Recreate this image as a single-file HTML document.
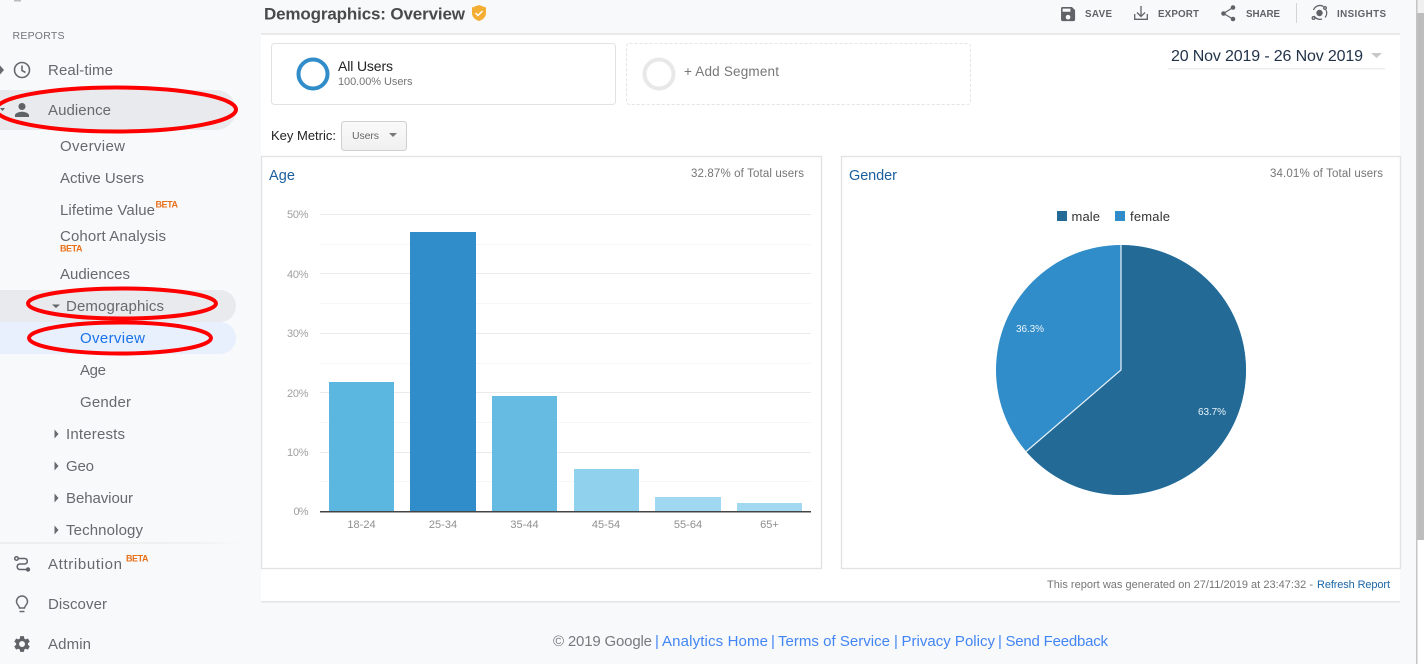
<!DOCTYPE html>
<html lang="en"><head><meta charset="utf-8"><title>Demographics: Overview</title>
<style>
html,body{margin:0;padding:0;width:1424px;height:664px;overflow:hidden;background:#f8f9fb}
svg{display:block}
text{font-family:"Liberation Sans",sans-serif}
.n{font-size:15px;fill:#66696d}
.b{font-size:9px;fill:#e8711a;font-weight:bold}
.a{font-size:9.800px;fill:#5f6368;font-weight:bold}
.y{font-size:11px;fill:#a0a0a0}
.x{font-size:11px;fill:#8f8f8f;text-anchor:middle}
.f{font-size:15px;fill:#4285f4}
</style></head><body>
<svg xmlns="http://www.w3.org/2000/svg" width="1424" height="664" viewBox="0 0 1424 664">
<defs><linearGradient id="btn" x1="0" y1="0" x2="0" y2="1"><stop offset="0" stop-color="#fafafa"/><stop offset="1" stop-color="#f0f0f0"/></linearGradient>
<linearGradient id="sep" x1="0" y1="0" x2="1" y2="0"><stop offset="0" stop-color="#eee"/><stop offset=".8" stop-color="#f1f1f1"/><stop offset="1" stop-color="#f8f9fb"/></linearGradient></defs>
<rect width="1424" height="664" fill="#f8f9fb"/>
<!-- scrollbar -->
<rect x="1417" y="0" width="7" height="664" fill="#fff"/>
<rect x="1417" y="0" width="7" height="13" fill="#f0f0f0"/>
<rect x="1417" y="13" width="7" height="527" fill="#bdbdbd"/>
<rect x="1416" y="0" width="1.500" height="664" fill="#c4c4c4"/>
<!-- sidebar highlights -->
<path d="M0 90H216a20 20 0 0 1 0 40H0Z" fill="#e8eaed"/>
<path d="M0 290H220a16 16 0 0 1 0 32H0Z" fill="#e8eaed"/>
<path d="M0 322H220a16 16 0 0 1 0 32H0Z" fill="#e8f0fe"/>
<rect x="0" y="542" width="242" height="2" fill="url(#sep)"/>
<rect x="14" y="0" width="7" height="1.500" fill="#bbb"/>
<!-- main panel -->
<rect x="261" y="34" width="1139" height="567" fill="#fff"/>
<rect x="261" y="33" width="1139" height="2" fill="#e9e9e9"/>
<rect x="261" y="601" width="1139" height="1.500" fill="#e4e4e4"/>
<!-- segments -->
<rect x="271.500" y="43.500" width="344" height="61" rx="3" fill="#fff" stroke="#e2e2e2"/>
<circle cx="313" cy="74" r="14.500" fill="none" stroke="#318dc9" stroke-width="4"/>
<rect x="626.500" y="43.500" width="344" height="61" rx="3" fill="#fff" stroke="#e4e4e4" stroke-dasharray="3 2"/>
<circle cx="659" cy="74" r="14.500" fill="none" stroke="#e8e8e8" stroke-width="4"/>
<!-- key metric button -->
<rect x="341.500" y="121.500" width="65" height="29" rx="3" fill="url(#btn)" stroke="#cfcfcf"/>
<path d="M389 133h8l-4 4z" fill="#777"/>
<!-- date -->
<rect x="1168" y="68" width="217" height="1.500" fill="#ececec"/>
<path d="M1371 53h11l-5.500 5z" fill="#c8c8c8"/>
<!-- chart panels -->
<rect x="261.500" y="156.500" width="560" height="412" fill="#fff" stroke="#e2e2e2" stroke-width="1.300"/>
<rect x="841.500" y="156.500" width="559" height="412" fill="#fff" stroke="#e2e2e2" stroke-width="1.300"/>
<!-- gridlines -->
<g fill="#ebebeb"><rect x="320" y="214" width="491" height="1"/><rect x="320" y="273" width="491" height="1"/><rect x="320" y="333" width="491" height="1"/><rect x="320" y="392" width="491" height="1"/><rect x="320" y="452" width="491" height="1"/></g>
<g fill="#f6f6f6"><rect x="320" y="244" width="491" height="1"/><rect x="320" y="303" width="491" height="1"/><rect x="320" y="363" width="491" height="1"/><rect x="320" y="422" width="491" height="1"/><rect x="320" y="481" width="491" height="1"/></g>
<!-- bars -->
<rect x="329" y="382" width="65" height="129" fill="#5bb7df"/>
<rect x="410" y="232" width="66" height="279" fill="#318dc9"/>
<rect x="492" y="396" width="65" height="115" fill="#65bbe2"/>
<rect x="574" y="469" width="65" height="42" fill="#90d1ee"/>
<rect x="655" y="497" width="66" height="14" fill="#a0d8f1"/>
<rect x="737" y="503" width="65" height="8" fill="#a2d9f1"/>
<rect x="320" y="511" width="491" height="1.500" fill="#444"/>
<!-- pie -->
<circle cx="1121" cy="370" r="125" fill="#318dc9"/>
<path d="M1121 370V245A125 125 0 1 1 1026.200 451.500Z" fill="#246a96"/>
<path d="M1121 245V370L1026.200 451.500" fill="none" stroke="#e8f2f8" stroke-width="1.200"/>
<rect x="1057" y="211" width="10" height="10" fill="#246a96"/>
<rect x="1115" y="211" width="10" height="10" fill="#318dc9"/>
<!-- ellipses -->
<g fill="none" stroke="#f00" stroke-width="4">
<ellipse cx="116" cy="109.500" rx="120" ry="22"/>
<ellipse cx="122" cy="303.500" rx="94" ry="15"/>
<ellipse cx="120" cy="338" rx="91" ry="15.500"/>
</g>
<!-- sidebar icons -->
<path d="M0 65.500l4 4.500-4 4.500z" fill="#66696d"/>
<g fill="none" stroke="#66696d" stroke-width="1.600"><circle cx="22" cy="70" r="7.500"/><path d="M22 65.500V70.500l3.500 2"/></g>
<path d="M0 108h5l-2.500 3z" fill="#5f6368"/>
<path transform="translate(11.500 99.500) scale(.875)" d="M12 12c2.210 0 4-1.790 4-4s-1.790-4-4-4-4 1.790-4 4 1.790 4 4 4zm0 2c-2.670 0-8 1.340-8 4v2h16v-2c0-2.660-5.330-4-8-4z" fill="#5f6368"/>
<path d="M52 304.500h8l-4 3.500z" fill="#5f6368"/>
<g fill="#66696d"><path d="M54.500 429.500l4 4.500-4 4.500z"/><path d="M54.500 461.500l4 4.500-4 4.500z"/><path d="M54.500 493.500l4 4.500-4 4.500z"/><path d="M54.500 525.500l4 4.500-4 4.500z"/></g>
<g fill="none" stroke="#5f6368" stroke-width="1.500"><circle cx="16.500" cy="558.500" r="1.800"/><path d="M18.500 558.500H25a2.800 2.800 0 0 1 0 5.500H19.500a2.800 2.800 0 0 0 0 5.500H26"/></g>
<circle cx="28" cy="569.500" r="2.200" fill="#5f6368"/>
<g fill="none" stroke="#66696d" stroke-width="1.500"><path d="M19.500 608c0-2-3-3.500-3-6.500a5.500 5.500 0 0 1 11 0c0 3-3 4.500-3 6.500z"/><path d="M19.500 611.500h5"/></g>
<path transform="translate(12.200 634.200) scale(.82)" fill="#5f6368" d="M19.140 12.940c.04-.3.06-.61.06-.94 0-.32-.02-.64-.07-.94l2.030-1.580c.18-.14.23-.41.12-.61l-1.920-3.320c-.12-.22-.37-.29-.59-.22l-2.390.96c-.5-.38-1.030-.7-1.620-.94l-.36-2.540c-.04-.24-.24-.41-.48-.41h-3.840c-.24 0-.43.17-.47.41l-.36 2.540c-.59.24-1.130.57-1.620.94l-2.390-.96c-.22-.08-.47 0-.59.22L2.740 8.870c-.12.21-.08.47.12.61l2.030 1.580c-.05.3-.09.63-.09.94s.02.64.07.94l-2.030 1.580c-.18.14-.23.41-.12.61l1.920 3.320c.12.22.37.29.59.22l2.390-.96c.5.38 1.030.7 1.620.94l.36 2.540c.05.24.24.41.48.41h3.840c.24 0 .44-.17.47-.41l.36-2.540c.59-.24 1.130-.56 1.620-.94l2.390.96c.22.08.47 0 .59-.22l1.920-3.320c.12-.22.07-.47-.12-.61l-2.010-1.580zM12 15.600c-1.980 0-3.600-1.620-3.600-3.600s1.620-3.600 3.600-3.600 3.600 1.620 3.600 3.600-1.620 3.600-3.600 3.600z"/>
<!-- shield -->
<path d="M479 5l7 2.500v5.500c0 4-3 6.800-7 8-4-1.200-7-4-7-8V7.500z" fill="#f4ae33"/>
<path d="M475.500 13l2.500 2.500 4.500-4.500" fill="none" stroke="#fff" stroke-width="1.500"/>
<!-- toolbar icons -->
<path transform="translate(1058.700 4.700) scale(.78)" fill="#5f6368" d="M17 3H5a2 2 0 0 0-2 2v14a2 2 0 0 0 2 2h14a2 2 0 0 0 2-2V7l-4-4zm-5 16a3 3 0 1 1 0-6 3 3 0 0 1 0 6zm3-10H5V5h10v4z"/>
<g fill="none" stroke="#5f6368" stroke-width="1.300"><path d="M1141 6v10M1137 12.500l4 4 4-4"/><path d="M1134.700 14v5.300h12.600V14"/></g>
<g fill="#5f6368"><circle cx="1233" cy="7.500" r="2.300"/><circle cx="1223.500" cy="13.500" r="2.300"/><circle cx="1233" cy="19" r="2.300"/></g>
<path d="M1233 7.500l-9.500 6 9.500 5.500" fill="none" stroke="#5f6368" stroke-width="1.200"/>
<rect x="1296" y="3" width="1" height="20" fill="#d5d5d5"/>
<g fill="none" stroke="#5f6368" stroke-width="1.300"><path d="M1313.500 10a6.800 6.800 0 0 1 10-3.500"/><path d="M1326 10a6.800 6.800 0 0 1-1 7.500"/><path d="M1322 19a6.800 6.800 0 0 1-8-3"/><circle cx="1325" cy="8" r="1.300"/><circle cx="1313.500" cy="18" r="1.300"/></g>
<circle cx="1319.500" cy="13" r="3.200" fill="#5f6368"/>
<!-- text: sidebar -->
<text x="12.500" y="39" font-size="10.500" fill="#70757a" textLength="52">REPORTS</text>
<text class="n" x="48" y="75" textLength="65">Real-time</text>
<text class="n" x="48" y="115" textLength="63">Audience</text>
<text class="n" x="60" y="151" textLength="65">Overview</text>
<text class="n" x="60" y="183" textLength="84">Active Users</text>
<text class="n" x="60" y="215" textLength="95">Lifetime Value</text>
<text class="b" x="155.500" y="207.500" textLength="22.500">BETA</text>
<text class="n" x="60" y="241" textLength="106">Cohort Analysis</text>
<text class="b" x="60" y="251.500" textLength="22.500">BETA</text>
<text class="n" x="60" y="279" textLength="70">Audiences</text>
<text class="n" x="66" y="311" textLength="98">Demographics</text>
<text class="n" x="80" y="343" textLength="65" style="fill:#1a73e8">Overview</text>
<text class="n" x="80" y="375" textLength="26">Age</text>
<text class="n" x="80" y="407" textLength="51">Gender</text>
<text class="n" x="66" y="439" textLength="59">Interests</text>
<text class="n" x="66" y="471" textLength="28">Geo</text>
<text class="n" x="66" y="503" textLength="67">Behaviour</text>
<text class="n" x="66" y="535" textLength="77">Technology</text>
<text class="n" x="48" y="569" textLength="74">Attribution</text>
<text class="b" x="126" y="561.500" textLength="22.500">BETA</text>
<text class="n" x="48" y="609" textLength="59">Discover</text>
<text class="n" x="48" y="649" textLength="43">Admin</text>
<!-- text: header -->
<text x="264" y="19.500" font-size="17" font-weight="bold" fill="#4a4a4a" textLength="201">Demographics: Overview</text>
<text class="a" x="1085" y="17" textLength="27">SAVE</text>
<text class="a" x="1158" y="17" textLength="41">EXPORT</text>
<text class="a" x="1246" y="17" textLength="34">SHARE</text>
<text class="a" x="1337" y="17" textLength="49">INSIGHTS</text>
<text x="338" y="71" font-size="14" fill="#222" textLength="55">All Users</text>
<text x="338" y="85" font-size="11" fill="#757575" textLength="74.500">100.00% Users</text>
<text x="684" y="76" font-size="13.500" fill="#777" textLength="95">+ Add Segment</text>
<text x="271" y="140" font-size="13" fill="#222" textLength="65">Key Metric:</text>
<text x="352" y="139" font-size="10.500" fill="#666" textLength="27">Users</text>
<text x="1171" y="61" font-size="16" fill="#22334a" textLength="192">20 Nov 2019 - 26 Nov 2019</text>
<!-- text: charts -->
<text x="269" y="180" font-size="14.500" fill="#1a5f9e" textLength="26">Age</text>
<text x="849" y="180" font-size="14.500" fill="#1a5f9e" textLength="48">Gender</text>
<text x="691" y="177" font-size="11.500" fill="#757575" textLength="113">32.87% of Total users</text>
<text x="1270" y="177" font-size="11.500" fill="#757575" textLength="113">34.01% of Total users</text>
<text class="y" x="287" y="218" textLength="21.500">50%</text>
<text class="y" x="287" y="278" textLength="21.500">40%</text>
<text class="y" x="287" y="337" textLength="21.500">30%</text>
<text class="y" x="287" y="397" textLength="21.500">20%</text>
<text class="y" x="287" y="456" textLength="21.500">10%</text>
<text class="y" x="293.500" y="515" textLength="15">0%</text>
<text class="x" x="361.500" y="528">18-24</text>
<text class="x" x="443" y="528">25-34</text>
<text class="x" x="524.500" y="528">35-44</text>
<text class="x" x="606" y="528">45-54</text>
<text class="x" x="688" y="528">55-64</text>
<text class="x" x="769.500" y="528">65+</text>
<text x="1071.500" y="221" font-size="13" fill="#333" textLength="28.500">male</text>
<text x="1130" y="221" font-size="13" fill="#333" textLength="40">female</text>
<text x="1016" y="332" font-size="10" fill="#e8f4fb" textLength="28">36.3%</text>
<text x="1198" y="415" font-size="10" fill="#e8f4fb" textLength="28">63.7%</text>
<!-- text: footer -->
<text x="1047" y="588" font-size="11" fill="#757575" textLength="266">This report was generated on 27/11/2019 at 23:47:32 -</text>
<text x="1317" y="588" font-size="11" fill="#1a66a8" textLength="73">Refresh Report</text>
<text x="553" y="646" font-size="15" fill="#77797c" textLength="99">© 2019 Google</text>
<text class="f" x="655" y="646">|</text>
<text class="f" x="662" y="646" textLength="106">Analytics Home</text>
<text class="f" x="771" y="646">|</text>
<text class="f" x="778" y="646" textLength="112">Terms of Service</text>
<text class="f" x="894" y="646">|</text>
<text class="f" x="901.500" y="646" textLength="93.500">Privacy Policy</text>
<text class="f" x="998" y="646">|</text>
<text class="f" x="1005.500" y="646" textLength="102.500">Send Feedback</text>
</svg>
</body></html>
